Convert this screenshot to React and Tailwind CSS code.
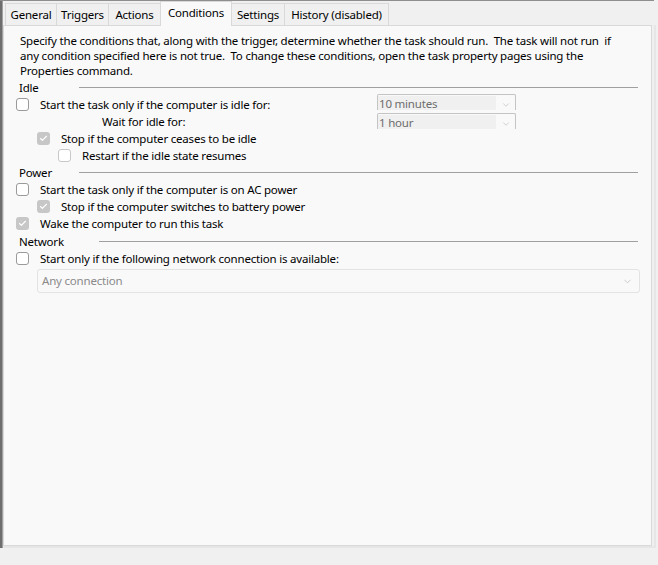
import { Check, ChevronDown } from 'lucide-react';

const tabs = [
  { label: 'General', w: 'w-[52px]' },
  { label: 'Triggers', w: 'w-[53px]' },
  { label: 'Actions', w: 'w-[53px]' },
  { label: 'Conditions', w: 'w-[72px]', active: true },
  { label: 'Settings', w: 'w-[54px]' },
  { label: 'History (disabled)', w: 'w-[105px]' },
];

function Box({ checked, disabled }) {
  if (checked) {
    return (
      <span className="w-[13px] h-[13px] rounded-[3px] bg-[#c7c7c7] flex items-center justify-center shrink-0">
        <Check className="w-[9px] h-[9px] text-white" strokeWidth={3} />
      </span>
    );
  }
  return <span className={`w-[13px] h-[13px] rounded-[3px] border shrink-0 bg-white ${disabled ? 'border-[#c8c8c8]' : 'border-[#9a9a9a]'}`} />;
}

function Row({ indent, checked, disabled, children, className = '' }) {
  return (
    <div className={`flex items-center h-[17px] ${className}`} style={{ paddingLeft: indent }}>
      <Box checked={checked} disabled={disabled} />
      <span className="ml-[11px]">{children}</span>
    </div>
  );
}

function Group({ title, lineStart }) {
  return (
    <div className="flex items-center h-[17px] pl-[19px] pr-[13px]">
      <span style={{ width: lineStart - 19 }}>{title}</span>
      <div className="flex-1 h-px bg-[#a0a0a0]" />
    </div>
  );
}

function MiniCombo({ value }) {
  return (
    <div className="w-[139px] h-[16px] overflow-hidden border border-b-0 border-[#c4c4c4] rounded-t-[2px] flex items-start">
      <div className="w-[118px] h-full bg-[#f0f0f0] text-[#6d6d6d] pl-[1px] leading-[16px] mt-[1px] overflow-hidden">{value}</div>
      <div className="flex-1 flex justify-center pt-[5px]">
        <ChevronDown className="w-[10px] h-[10px] text-[#a8a8a8]" strokeWidth={1.2} />
      </div>
    </div>
  );
}

export default function App() {
  return (
    <div className="w-[658px] h-[565px] bg-[#f0f0f0] text-[11.5px] tracking-[-0.2px] text-black overflow-hidden relative" style={{ fontFamily: '"Segoe UI", "Noto Sans", sans-serif' }}>
      <div className="h-px bg-[#8e8e8e] w-[654px]" />
      <div className="flex h-[547px]">
        <div className="w-[3px] bg-[#6e6e6e] border-r border-[#a0a0a0]" />
        <div className="flex-1 flex flex-col">
          <div className="flex items-end h-[24px] pl-[2px] relative z-10">
            {tabs.map(t => t.active ? (
              <div key={t.label} className={`${t.w} h-[25px] -ml-px bg-[#f9f9f9] border border-b-0 border-[#d9d9d9] flex items-center justify-center pb-[2px] -mb-px`}>{t.label}</div>
            ) : (
              <div key={t.label} className={`${t.w} h-[22px] bg-[#f0f0f0] border border-b-0 border-[#d9d9d9] -ml-px first:ml-0 flex items-center justify-center`}>{t.label}</div>
            ))}
          </div>
          <div className="flex-1 border-r-[2px] border-b-[2px] border-[#e6e6e6] mr-[2px]">
            <div className="h-full bg-[#f9f9f9] border border-[#d9d9d9] mr-[2px] mb-[2px] flex flex-col">
              <p className="pl-[16px] pr-[20px] pt-[7px] leading-[15px]">
                Specify the conditions that, along with the trigger, determine whether the task should run.&nbsp; The task will not run&nbsp; if any condition specified here is not true.&nbsp; To change these conditions, open the task property pages using the Properties command.
              </p>
              <div className="-ml-[4px] mt-[1px]">
                <Group title="Idle" lineStart={79} />
                <div className="flex items-start h-[17px] mt-[-2px]">
                  <Row indent={16} className="w-[377px] mt-[2px]">Start the task only if the computer is idle for:</Row>
                  <MiniCombo value="10 minutes" />
                </div>
                <div className="flex items-start h-[17px] mt-[2px]">
                  <span className="pl-[102px] w-[377px] leading-[17px]">Wait for idle for:</span>
                  <MiniCombo value="1 hour" />
                </div>
                <Row indent={37} checked>Stop if the computer ceases to be idle</Row>
                <Row indent={58} disabled>Restart if the idle state resumes</Row>
                <Group title="Power" lineStart={79} />
                <Row indent={16}>Start the task only if the computer is on AC power</Row>
                <Row indent={37} checked>Stop if the computer switches to battery power</Row>
                <Row indent={16} checked>Wake the computer to run this task</Row>
                <div className="mt-[1px]"><Group title="Network" lineStart={99} /></div>
                <Row indent={16}>Start only if the following network connection is available:</Row>
                <div className="ml-[37px] mr-[11px] mt-[2px] h-[24px] border border-[#e3e3e3] rounded-[3px] flex items-center pl-[4px] pr-[6px] text-[#8a8a8a]">
                  <span className="flex-1">Any connection</span>
                  <ChevronDown className="w-[11px] h-[11px] text-[#a8a8a8]" strokeWidth={1.2} />
                </div>
              </div>
            </div>
          </div>
        </div>
      </div>
    </div>
  );
}
